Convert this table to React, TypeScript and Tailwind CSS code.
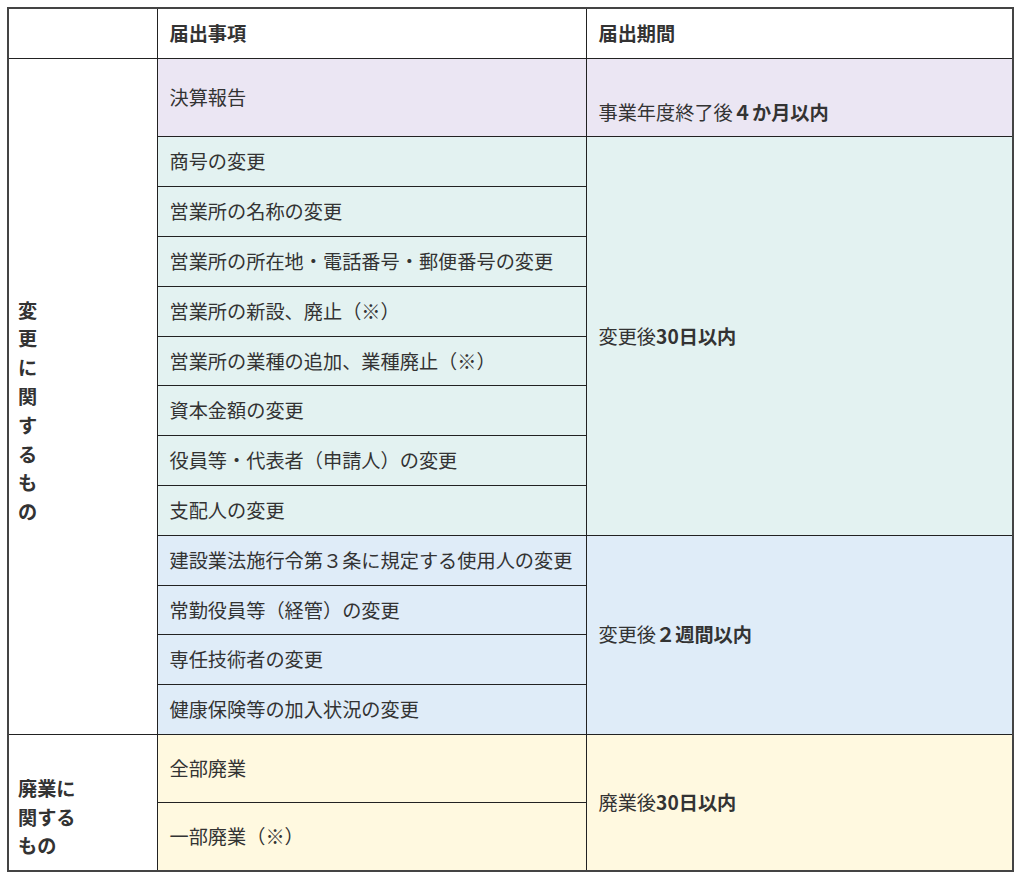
import type { FC, ReactNode } from 'react'

type Item = { label: string }

interface CellProps {
  children?: ReactNode
  className?: string
  rowSpan?: number
}

// 共通セル
const Cell: FC<CellProps> = ({ children, className = '', rowSpan }) => (
  <td rowSpan={rowSpan} className={`border border-[#222] py-[10px] pr-3 align-middle ${className}`}>
    {children}
  </td>
)

const purple = 'bg-[#ebe6f3] pl-3'
const teal = 'bg-[#e3f2f1] pl-3'
const blue = 'bg-[#dfecf8] pl-3'
const yellow = 'bg-[#fff9e0] pl-3'

const thirtyDays: Item[] = [
  { label: '商号の変更' },
  { label: '営業所の名称の変更' },
  { label: '営業所の所在地・電話番号・郵便番号の変更' },
  { label: '営業所の新設、廃止（※）' },
  { label: '営業所の業種の追加、業種廃止（※）' },
  { label: '資本金額の変更' },
  { label: '役員等・代表者（申請人）の変更' },
  { label: '支配人の変更' },
]

const twoWeeks: Item[] = [
  { label: '建設業法施行令第３条に規定する使用人の変更' },
  { label: '常勤役員等（経管）の変更' },
  { label: '専任技術者の変更' },
  { label: '健康保険等の加入状況の変更' },
]

export default function App() {
  const changeLabel = '変更に関するもの'.split('')
  const total = 1 + thirtyDays.length + twoWeeks.length

  return (
    <div className="min-h-[882px] bg-white pt-[7px] pl-[7px] font-['Noto_Sans_CJK_JP','Noto_Sans',sans-serif] text-[19.2px] leading-[1.5] text-[#333]">
      <table className="w-[1007px] table-fixed border-collapse border-2 border-[#444]">
        <colgroup>
          <col className="w-[149px]" />
          <col className="w-[429px]" />
          <col />
        </colgroup>
        <thead>
          <tr>
            <th className="border border-[#222] px-3 py-[10px]" />
            <th className="border border-[#222] px-3 py-[10px] text-left font-bold">届出事項</th>
            <th className="border border-[#222] px-3 py-[10px] text-left font-bold">届出期間</th>
          </tr>
        </thead>
        <tbody>
          {/* 決算報告 */}
          <tr>
            <Cell rowSpan={total} className="bg-white pl-[9px] font-bold">
              <br />
              {changeLabel.map((c, i) => (
                <span key={i}>
                  {c}
                  <br />
                </span>
              ))}
            </Cell>
            <Cell className={purple}>決算報告</Cell>
            <Cell className={purple}>
              <br />
              事業年度終了後<b>４か月以内</b>
            </Cell>
          </tr>

          {/* 変更後30日以内 */}
          {thirtyDays.map((item, i) => (
            <tr key={item.label}>
              <Cell className={teal}>{item.label}</Cell>
              {i === 0 && (
                <Cell rowSpan={thirtyDays.length} className={teal}>
                  変更後<b>30日以内</b>
                </Cell>
              )}
            </tr>
          ))}

          {/* 変更後２週間以内 */}
          {twoWeeks.map((item, i) => (
            <tr key={item.label}>
              <Cell className={blue}>{item.label}</Cell>
              {i === 0 && (
                <Cell rowSpan={twoWeeks.length} className={blue}>
                  変更後<b>２週間以内</b>
                </Cell>
              )}
            </tr>
          ))}

          {/* 廃業 */}
          <tr>
            <Cell rowSpan={2} className="bg-white pl-[9px] font-bold">
              <br />
              廃業に
              <br />
              関する
              <br />
              もの
            </Cell>
            <Cell className={yellow}>全部廃業</Cell>
            <Cell rowSpan={2} className={yellow}>
              廃業後<b>30日以内</b>
            </Cell>
          </tr>
          <tr>
            <Cell className={yellow}>一部廃業（※）</Cell>
          </tr>
        </tbody>
      </table>
    </div>
  )
}
